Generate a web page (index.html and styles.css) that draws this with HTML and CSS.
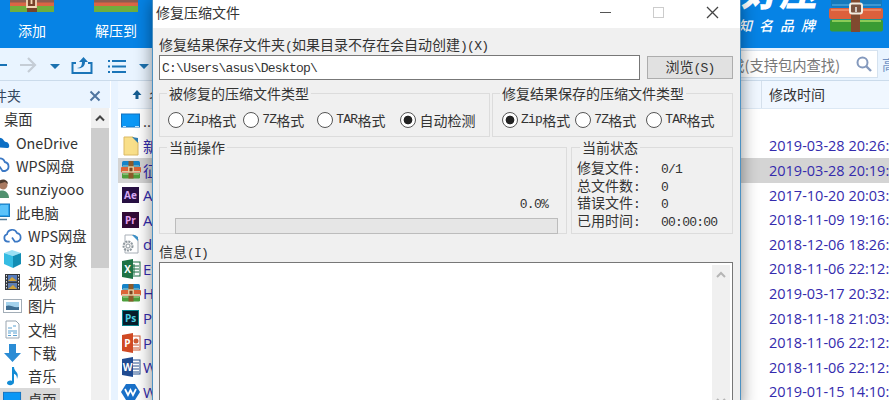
FILE: index.html
```html
<!DOCTYPE html>
<html lang="zh-CN">
<head>
    <meta charset="UTF-8">
    <meta name="viewport" content="width=device-width, initial-scale=1.0">
    <title>修复压缩文件</title>
    <link rel="stylesheet" href="styles.css">
</head>
<body>
    <svg class="defs">
        <symbol id="i-zip" viewBox="0 0 20 20">
            <rect x="1" y="1" width="18" height="6" rx="1.5" fill="#1583c8"/>
            <rect x="0" y="7" width="20" height="5.5" rx="1" fill="#dc6437"/>
            <rect x="1" y="13" width="18" height="5.5" rx="1.2" fill="#4d9f3c"/>
            <path d="M2 6h16M1 11.5h18M2 14h16" stroke="#d5e5c0" stroke-width=".8"/>
            <rect x="7.5" y="1" width="5" height="17.5" fill="#8c5a2b"/>
            <rect x="7.8" y="7" width="4.4" height="5" fill="#7a4420" stroke="#f6e3b5" stroke-width="1.2"/>
        </symbol>
        <symbol id="i-cloud" viewBox="0 0 20 16">
            <path d="M7 14H5a4 4 0 0 1-.8-7.8A5.5 5.5 0 0 1 14.8 5 4.6 4.6 0 0 1 15 14h-2.500l-3-4.500" fill="none" stroke="#3b78c4" stroke-width="1.8" stroke-linejoin="round"/>
        </symbol>
        <symbol id="i-monitor" viewBox="0 0 20 18">
            <rect x=".5" y="1" width="19" height="12.500" fill="#2aa4ef" stroke="#1b79bb"/>
            <path d="M2 12 11 2h7v10z" fill="#5cc3fa"/>
            <path d="M4 16.500h13" stroke="#567d99" stroke-width="1.500"/>
        </symbol>
        <symbol id="i-desk" viewBox="0 0 20 16">
            <rect x=".5" y="1" width="18" height="13" fill="#0a97f5" stroke="#1272c0"/>
            <path d="M2 13.500h3M14 13.500h4" stroke="#bfe3ff"/>
        </symbol>
    </svg>

    <div class="app">
        <div class="ribbon">
            <div class="tool">
                <svg width="44" height="13" viewBox="0 0 44 13">
                    <rect width="44" height="3" fill="#8b5c51"/>
                    <rect y="2.500" width="44" height="4" fill="#da6545"/>
                    <rect y="6" width="44" height="6" fill="#6fae3d"/>
                    <rect x="17" width="10" height="12" fill="#77432a"/>
                    <path d="M17 0v7h9V0M21.500 0v4" fill="none" stroke="#f4d9b8" stroke-width="1.800"/>
                </svg>
                <span>添加</span>
            </div>
            <div class="tool">
                <svg width="44" height="13" viewBox="0 0 44 13">
                    <rect width="44" height="3" fill="#8b5c51"/>
                    <rect y="2.500" width="44" height="4" fill="#da6545"/>
                    <rect y="6" width="44" height="6" fill="#6fae3d"/>
                </svg>
                <span>解压到</span>
            </div>
            <div class="brand">
                <div class="brand-name">好压</div>
                <div class="brand-sub">知名品牌</div>
            </div>
            <svg class="brand-icon" width="55" height="34" viewBox="0 0 55 34">
                <rect x="2" y="-5" width="51" height="12.500" rx="2" fill="#1479bd"/>
                <path d="M3 5h49" stroke="#69b8e7"/>
                <rect x="0" y="8" width="54" height="11" rx="2" fill="#dc603c"/>
                <path d="M2 10h50" stroke="#f0916d" stroke-width="1.500"/>
                <rect x="1" y="19.500" width="53" height="12" rx="2" fill="#3a9b33"/>
                <path d="M3 21h49" stroke="#8bcb57" stroke-width="2"/>
                <rect x="22" y="0" width="9" height="32" fill="#80492f"/>
                <rect x="21" y="3.500" width="12" height="10" rx="2" fill="#7a5340" stroke="#f2ece1" stroke-width="2"/>
                <path d="M27 7v5" stroke="#eee" stroke-width="1.500"/>
            </svg>
        </div>

        <div class="toolbar">
            <svg class="nav" width="152" height="33" viewBox="0 0 152 33">
                <path d="M0 17h7" stroke="#1872b5" stroke-width="2"/>
                <path d="M20 17h14M28 10l7 7-7 7" fill="none" stroke="#c5cdd6" stroke-width="2.200"/>
                <path d="M50 16h10l-5 5zM139 16h10l-5 5z" fill="#1c72b0"/>
                <path d="M76 15h-3.500v10h19V15H88" fill="none" stroke="#1b75b8" stroke-width="2"/>
                <path d="M77 20c4 0 5-3 5-6h-3l4.500-5 4.500 5h-3c0 5-4 7-8 6z" fill="#1b75b8"/>
                <path d="M108 13h2m2 0h14M108 18.500h2m2 0h14M108 24h2m2 0h14" stroke="#1b75b8" stroke-width="2"/>
            </svg>
            <div class="search">
                <span>查找(支持包内查找)</span>
                <svg width="18" height="18" viewBox="0 0 18 18">
                    <circle cx="7.500" cy="7.500" r="5" fill="none" stroke="#8499bd" stroke-width="2"/>
                    <path d="M11 11l5 5" stroke="#8499bd" stroke-width="2.400"/>
                </svg>
            </div>
            <span class="advanced">高级</span>
        </div>

        <div class="main">
            <div class="sidebar">
                <div class="side-head">
                    <span>件夹</span>
                    <svg width="12" height="12" viewBox="0 0 12 12"><path d="M1.500 1.500l9 9m0-9l-9 9" stroke="#5075a0" stroke-width="2"/></svg>
                </div>
                <div class="side-body">
                    <ul class="tree">
                        <li class="root">桌面</li>
                        <li class="top"><svg width="20" height="16" viewBox="0 0 20 16"><path d="M1 13V9c1-4 5-7 10-5 3 1 3 4 5 4 3 0 5 6 1 6z" fill="#0c6fc5"/></svg>OneDrive</li>
                        <li class="top"><svg width="20" height="16"><use href="#i-cloud"/></svg>WPS网盘</li>
                        <li class="top"><svg width="20" height="20" viewBox="0 0 20 20"><circle cx="13" cy="6" r="4.500" fill="#a97a61"/><path d="M8 5c0-6 10-6 10 0l-3-2z" fill="#4d3a2e"/><path d="M5 19c0-10 14-10 14 0z" fill="#50916f"/></svg>sunziyooo</li>
                        <li class="top"><svg width="20" height="18"><use href="#i-monitor"/></svg>此电脑</li>
                        <li><svg width="19" height="16"><use href="#i-cloud"/></svg>WPS网盘</li>
                        <li><svg width="19" height="20" viewBox="0 0 19 20"><path d="M1 4l8-3 9 3-8 3z" fill="#9be0f5"/><path d="M1 4l9 3v12l-9-4z" fill="#35bce3"/><path d="M10 7l8-3v11l-8 4z" fill="#128db4"/></svg>3D 对象</li>
                        <li><svg width="19" height="18" viewBox="0 0 19 18"><rect x="2" y="1" width="15" height="16" fill="#34383d"/><rect x="5" y="2" width="9" height="6.500" fill="#567bba"/><rect x="5" y="10" width="9" height="6" fill="#5e7fb4"/><path d="M5 8l4-4 5 4zM5 16l5-4 4 4z" fill="#d0a43c"/><path d="M3.500 2v14M15.500 2v14" stroke="#ddd" stroke-dasharray="1.500 1.500"/></svg>视频</li>
                        <li><svg width="19" height="16" viewBox="0 0 19 16"><rect x=".5" y="1.500" width="18" height="13" fill="#fff" stroke="#a2adb7"/><rect x="3" y="4" width="13" height="8" fill="#a4d2ec"/><path d="M3 8c4-2 7 2 13 1v3H3z" fill="#3e6e92"/></svg>图片</li>
                        <li><svg width="19" height="19" viewBox="0 0 19 19"><path d="M3 1h10l3 3v14H3z" fill="#fff" stroke="#99a5b0"/><path d="M5 8h4M10 6h3M5 11h9M5 13h3m2 0h4M5 15.500h3m2 0h4" stroke="#5ba1d1" stroke-width="1.200"/></svg>文档</li>
                        <li><svg width="19" height="20" viewBox="0 0 19 20"><path d="M6 1h7v9h5l-8.500 9L1 10h5z" fill="#2b8cd5"/></svg>下载</li>
                        <li><svg width="19" height="20" viewBox="0 0 19 20"><path d="M9 1h2c0 5 6 5 3 12 0-5-3-5-3-5v8c0 4-7 4-7 1 0-2 3-3 5-2z" fill="#128bd5"/></svg>音乐</li>
                        <li class="picked"><svg width="19" height="16"><use href="#i-desk"/></svg>桌面</li>
                    </ul>
                    <div class="side-scroll">
                        <svg width="18" height="20" viewBox="0 0 18 20"><path d="M5 12.500l4-4 4 4" fill="none" stroke="#444" stroke-width="2"/></svg>
                        <div class="thumb"></div>
                    </div>
                </div>
            </div>

            <div class="files">
                <div class="file-head">
                    <svg width="14" height="14" viewBox="0 0 14 14"><path d="M7 2l4.500 5H8.500v4h-3V7h-3z" fill="#165d91"/></svg>
                    <span class="col-name">名称</span>
                    <span class="col-date">修改时间</span>
                </div>
                <div class="file"><svg width="20" height="16"><use href="#i-desk"/></svg><span class="name up">..</span></div>
                <div class="file"><svg width="20" height="20" viewBox="0 0 20 20"><path d="M3 1h9l5 5v13H3z" fill="#f9df89" stroke="#dbb964"/><path d="M11 1l6 6V2z" fill="#317eb3"/></svg><span class="name">新建</span><span>2019-03-28 20:26:</span></div>
                <div class="file selected"><svg width="20" height="20"><use href="#i-zip"/></svg><span class="name">征文</span><span>2019-03-28 20:19:</span></div>
                <div class="file"><svg width="20" height="18" viewBox="0 0 20 18"><rect x="1" y="1" width="17" height="16" fill="#281043"/><text x="9.500" y="13" class="badge" fill="#d6a9f3">Ae</text></svg><span class="name">Adobe</span><span>2017-10-20 20:03:</span></div>
                <div class="file"><svg width="20" height="18" viewBox="0 0 20 18"><rect x="1" y="1" width="17" height="16" fill="#310a35"/><text x="9.500" y="13" class="badge" fill="#e7a0ee">Pr</text></svg><span class="name">Adobe</span><span>2018-11-09 19:16:</span></div>
                <div class="file"><svg width="20" height="20" viewBox="0 0 20 20"><path d="M4 1h9l4 4v14H4z" fill="#fff" stroke="#a9b0b8"/><path d="M11 1l6 6V3l-3-2z" fill="#3f91c7"/><circle cx="7" cy="12" r="4.500" fill="#eee" stroke="#8e979e" stroke-width="2" stroke-dasharray="2 1"/><circle cx="7" cy="12" r="2" fill="#fff" stroke="#8e979e"/></svg><span class="name">d</span><span>2018-12-06 18:26:</span></div>
                <div class="file"><svg width="20" height="20" viewBox="0 0 20 20"><rect x="9" y="3" width="10" height="14" fill="#fff" stroke="#1e7345"/><path d="M13 5v11M10 7h8M10 10h8M10 13h8" stroke="#1e7345"/><path d="M1 2l11-2v20L1 18z" fill="#1e7345"/><text x="6.500" y="14" class="badge" fill="#fff">X</text></svg><span class="name">Excel</span><span>2018-11-06 22:12:</span></div>
                <div class="file"><svg width="20" height="20"><use href="#i-zip"/></svg><span class="name">Hao</span><span>2019-03-17 20:32:</span></div>
                <div class="file"><svg width="20" height="18" viewBox="0 0 20 18"><rect x="1.500" y="1.500" width="16" height="15" fill="#071d2b" stroke="#07848d"/><text x="9.500" y="13" class="badge" fill="#4bcee0">Ps</text></svg><span class="name">Photo</span><span>2018-11-18 21:03:</span></div>
                <div class="file"><svg width="20" height="20" viewBox="0 0 20 20"><rect x="9" y="3" width="10" height="14" fill="#fff" stroke="#d05b32"/><path d="M12 12h6M12 15h6" stroke="#d05b32"/><circle cx="15" cy="8" r="2.500" fill="#d05b32"/><path d="M1 2l11-2v20L1 18z" fill="#d04a24"/><text x="6.500" y="14" class="badge" fill="#fff">P</text></svg><span class="name">Power</span><span>2018-11-06 22:12:</span></div>
                <div class="file"><svg width="20" height="20" viewBox="0 0 20 20"><rect x="9" y="3" width="10" height="14" fill="#fff" stroke="#285292"/><path d="M12 6h6M12 9h6M12 12h6M12 15h6" stroke="#285292"/><path d="M1 2l11-2v20L1 18z" fill="#204b91"/><text x="6.500" y="14" class="badge" fill="#fff">W</text></svg><span class="name">Word</span><span>2018-11-06 22:12:</span></div>
                <div class="file"><svg width="20" height="20" viewBox="0 0 20 20"><path d="M5 2h9l5 8-5 8H5L0 10z" fill="#1970c8"/><path d="M4 7l3 6 2.500-5 2.500 5 3-6" fill="none" stroke="#fff" stroke-width="1.700"/></svg><span class="name">WPS</span><span>2019-01-15 14:10:</span></div>
            </div>
        </div>
    </div>

    <div class="dialog">
        <div class="title-bar">
            <span>修复压缩文件</span>
            <svg width="140" height="28" viewBox="0 0 140 28">
                <path d="M13 12.500h11" stroke="#555"/>
                <rect x="66.500" y="7.500" width="10" height="10" fill="none" stroke="#ccc"/>
                <path d="M120 7l11 11m0-11l-11 11" stroke="#444" stroke-width="1.300"/>
            </svg>
        </div>
        <div class="dialog-body">
            <label class="line">修复结果保存文件夹<i>(</i>如果目录不存在会自动创建<i>)(X)</i></label>
            <div class="path-row">
                <div class="path"><i>C:\Users\asus\Desktop\</i></div>
                <button>浏览<i>(S)</i></button>
            </div>
            <div class="groups types">
                <fieldset class="source">
                    <legend>被修复的压缩文件类型</legend>
                    <div class="radios">
                        <label><b></b><i>Zip</i>格式</label>
                        <label><b></b><i>7Z</i>格式</label>
                        <label><b></b><i>TAR</i>格式</label>
                        <label><b class="on"></b>自动检测</label>
                    </div>
                </fieldset>
                <fieldset class="target">
                    <legend>修复结果保存的压缩文件类型</legend>
                    <div class="radios">
                        <label><b class="on"></b><i>Zip</i>格式</label>
                        <label><b></b><i>7Z</i>格式</label>
                        <label><b></b><i>TAR</i>格式</label>
                    </div>
                </fieldset>
            </div>
            <div class="groups state">
                <fieldset class="current">
                    <legend>当前操作</legend>
                    <div class="percent"><i>0.0%</i></div>
                    <div class="progress"></div>
                </fieldset>
                <fieldset class="status">
                    <legend>当前状态</legend>
                    <dl>
                        <dt>修复文件<i>:</i></dt><dd><i>0/1</i></dd>
                        <dt>总文件数<i>:</i></dt><dd><i>0</i></dd>
                        <dt>错误文件<i>:</i></dt><dd><i>0</i></dd>
                        <dt>已用时间<i>:</i></dt><dd><i>00:00:00</i></dd>
                    </dl>
                </fieldset>
            </div>
            <label class="line">信息<i>(I)</i></label>
            <div class="log">
                <div class="log-scroll">
                    <svg width="18" height="20" viewBox="0 0 18 20"><path d="M5 12l4-4 4 4" fill="none" stroke="#b5b5b5" stroke-width="2"/></svg>
                    <svg width="18" height="20" viewBox="0 0 18 20"><path d="M5 8l4 4 4-4" fill="none" stroke="#b5b5b5" stroke-width="2"/></svg>
                </div>
            </div>
        </div>
    </div>
</body>
</html>
```
FILE: styles.css
```css
* {
    box-sizing: border-box;
}
body {
    margin: 0;
    height: 400px;
    overflow: hidden;
    position: relative;
    font-family: "Noto Sans CJK SC", sans-serif;
    font-size: 14px;
    color: #333;
}
svg {
    display: block;
    flex: none;
}
.defs {
    display: none;
}
.app {
    height: 400px;
    overflow: hidden;
    background: #fff;
}
.ribbon {
    display: flex;
    height: 48px;
    padding-left: 10px;
    background: #0683e5;
    color: #fff;
}
.tool {
    width: 44px;
    margin-right: 40px;
    display: flex;
    flex-direction: column;
    align-items: center;
    white-space: nowrap;
}
.tool span {
    margin-top: 7px;
    line-height: 20px;
}
.brand {
    margin-left: auto;
    width: 94px;
    height: 48px;
    overflow: hidden;
}
.brand-name {
    height: 16px;
    margin-top: -11px;
    line-height: 2px;
    font-size: 38px;
    font-weight: 900;
    font-style: italic;
    text-align: right;
    padding-right: 12px;
}
.brand-sub {
    margin-top: 10px;
    font-size: 14px;
    font-weight: 500;
    font-style: italic;
    letter-spacing: 7px;
    line-height: 20px;
    padding-left: 3px;
    white-space: nowrap;
}
.brand-icon {
    margin: 0 5px 0 0;
}
.toolbar {
    display: flex;
    align-items: center;
    height: 33px;
    background: #e9f4ff;
    border-bottom: 1px solid #cbdbeb;
}
.search {
    display: flex;
    align-items: center;
    justify-content: flex-end;
    margin-left: auto;
    width: 200px;
    height: 28px;
    padding-right: 4px;
    background: #fff;
    border: 1px solid #d5e2ef;
    color: #777;
}
.search span {
    margin-right: 15px;
    font-size: 14.3px;
}
.advanced {
    width: 7px;
    margin-left: 4px;
    color: #7193c5;
    white-space: nowrap;
}
.main {
    display: flex;
    height: 319px;
}
.sidebar {
    width: 110px;
    flex: none;
    overflow: hidden;
}
.side-head {
    display: flex;
    align-items: center;
    justify-content: space-between;
    height: 27px;
    padding: 2px 9px 0 0;
    background: #eaf4ff;
    color: #34475e;
}
.side-head span {
    margin: -2px 0 0 -7px;
}
.side-body {
    display: flex;
}
.tree {
    list-style: none;
    margin: 0;
    padding: 0;
    width: 91px;
    margin-top: -1px;
    overflow: hidden;
    font-size: 14.3px;
}
.tree li {
    display: flex;
    align-items: center;
    gap: 6px;
    height: 23.4px;
    padding-left: 3px;
    white-space: nowrap;
}
.tree .root {
    padding-left: 4px;
}
.tree .top {
    padding-left: 0;
    margin-left: -10px;
}
.tree .picked {
    width: 60px;
    background: #d9d9d9;
}
.side-scroll {
    width: 18px;
    height: 292px;
    background: #f0f0f0;
}
.thumb {
    height: 140px;
    background: #cdcdcd;
}
.files {
    flex: 1;
    margin-left: 1px;
    border-left: 7px solid #e8f3ff;
}
.file-head {
    display: flex;
    align-items: center;
    height: 28px;
    padding-left: 12px;
    background: #f0f7ff;
    border-bottom: 1px solid #dce8f4;
}
.col-name {
    width: 617px;
    padding-left: 5px;
}
.col-date {
    height: 27px;
    line-height: 27px;
    border-left: 1px solid #d5e0ec;
    padding-left: 7px;
}
.file {
    display: flex;
    align-items: center;
    height: 24.6px;
    padding-left: 3px;
    color: #342bad;
    font-family: "Open Sans", "Noto Sans CJK SC", sans-serif;
    font-size: 14.5px;
    white-space: nowrap;
}
.file .name {
    width: 628px;
    padding-left: 2px;
    font-size: 15px;
}
.file .up {
    color: #333;
}
.selected {
    background: #d4d4d4;
}
.badge {
    font: bold 10px "Open Sans", sans-serif;
    text-anchor: middle;
}

/* repair window */
.dialog {
    position: absolute;
    top: 0;
    left: 152px;
    width: 589px;
    height: 410px;
    background: #f0f0f0;
    border: solid #4c91c2;
    border-width: 0 1px;
    box-shadow: 0 0 16px rgba(0, 0, 0, 0.45);
    color: #333;
}
.title-bar {
    display: flex;
    justify-content: space-between;
    height: 28px;
    padding: 0 13px 0 3px;
    line-height: 24px;
    background: #fff;
}
.dialog-body {
    padding: 8px 7px 0 6px;
}
.dialog i {
    font-family: "Liberation Mono", monospace;
    font-style: normal;
    font-size: 13px;
    letter-spacing: -0.75px;
}
.line {
    display: block;
    height: 19px;
    line-height: 17px;
}
.path-row {
    display: flex;
    justify-content: space-between;
    height: 25px;
}
.path {
    width: 481px;
    padding-left: 2px;
    line-height: 20px;
    background: #fff;
    border: 1px solid #777;
}
.dialog button {
    width: 86px;
    height: 23px;
    margin-top: 1px;
    padding: 0;
    border: 1px solid #adadad;
    background: #e1e1e1;
    font: inherit;
    line-height: 19px;
    color: inherit;
}
.groups {
    display: flex;
    justify-content: space-between;
}
fieldset {
    min-width: 0;
    margin: 0;
    padding: 0;
    border: 1px solid #dcdcdc;
}
legend {
    margin-left: 7px;
    padding: 0 2px;
    height: 16px;
    line-height: 16px;
}
.types {
    margin-top: 5px;
    height: 52px;
}
.source {
    width: 331px;
}
.target {
    width: 241px;
}
.radios {
    display: flex;
    padding: 9px 0 0 8px;
}
.target .radios {
    padding-left: 9px;
}
.radios label {
    display: flex;
    align-items: center;
    height: 20px;
    line-height: 20px;
    margin-right: 7px;
}
.source label:nth-child(2) {
    margin-right: 13px;
}
.source label:nth-child(3) {
    margin-right: 15px;
}
.target label:nth-child(1) {
    margin-right: 5px;
}
.target label:nth-child(2) {
    margin-right: 10px;
}
.radios b {
    width: 16px;
    height: 16px;
    margin-right: 3px;
    border: 1px solid #555;
    border-radius: 50%;
    background: #fff;
}
.radios .on {
    background: radial-gradient(circle, #222 4px, #fff 4.7px);
}
.state {
    margin-top: 2px;
    height: 95px;
}
.current {
    width: 408px;
}
.status {
    width: 162px;
}
.status legend {
    margin-left: 8px;
}
.percent {
    margin-top: 38px;
    padding-right: 18px;
    text-align: right;
    line-height: 18px;
}
.progress {
    height: 16px;
    margin: 4px 8px 0 15px;
    background: #e6e6e6;
    border: 1px solid #bcbcbc;
}
dl {
    display: grid;
    grid-template-columns: 84px 1fr;
    grid-auto-rows: 17.6px;
    margin: 3px 0 0 5px;
    line-height: 18px;
}
dd {
    margin: 0;
}
.state + .line {
    margin-top: 9px;
}
.log {
    height: 150px;
    border: 1px solid #777;
    background: #fff;
    padding: 2px;
}
.log-scroll {
    display: flex;
    flex-direction: column;
    justify-content: space-between;
    width: 18px;
    height: 146px;
    margin-left: auto;
    background: #f0f0f0;
}
```
